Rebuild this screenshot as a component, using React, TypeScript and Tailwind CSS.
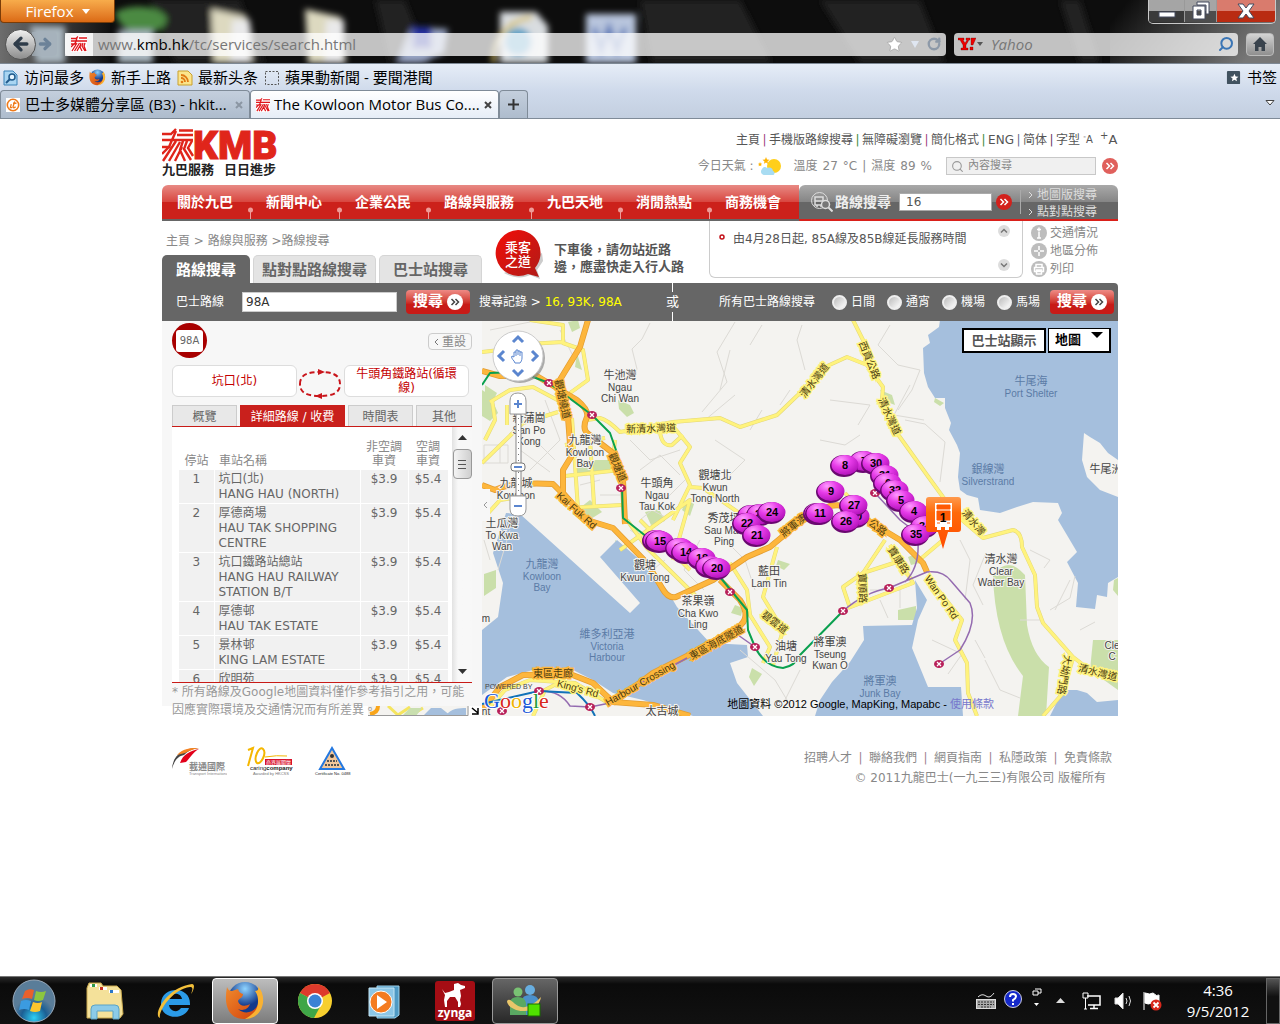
import type { ReactNode } from "react";
import { ArrowLeft, ArrowRight, Search, Star, RotateCw } from "lucide-react";

const pageFont = "[font-family:'DejaVu_Sans','Noto_Sans_CJK_TC',sans-serif]";
const uiFont = "[font-family:'Open_Sans','Noto_Sans_CJK_SC',sans-serif]";

/* ---------- shared drawings ---------- */

const KmbMark = ({ className }: { className: string }) => (
  <svg viewBox="0 0 16 16" className={className} fill="none">
    <rect width="16" height="16" fill="#fff" />
    <path d="M0 2.500h5l2-2M8 2h8M0 5h16M5 5l1-3M0 8h4l1-3M0 11l4-4M1 15l5-8M3.500 15l5-8M6 15l4-7M10 7l-1 4 2 4M12 7l-1 3 3 5M14 7l-1 3 2 5" stroke="#e0151b" strokeWidth="1.300" />
  </svg>
);

const Chevrons = ({ className, disc, ink }: { className: string; disc: string; ink: string }) => (
  <svg viewBox="0 0 16 16" className={className} fill="none">
    <circle cx="8" cy="8" r="8" fill={disc} />
    <path d="M4.500 5l3 3-3 3M8.500 5l3 3-3 3" stroke={ink} strokeWidth="1.500" />
  </svg>
);

/* ---------- browser window ---------- */

const DesktopBlur = () => (
  <svg className="absolute inset-0 h-full w-full" viewBox="0 0 1280 63" preserveAspectRatio="xMinYMin slice" aria-hidden="true">
    <defs>
      <filter id="glass" x="-20%" y="-20%" width="140%" height="140%">
        <feGaussianBlur stdDeviation="3" />
      </filter>
      <linearGradient id="edge" x1="0" x2="1">
        <stop offset="0" stopColor="#6d6d6d" />
        <stop offset="1" stopColor="#111" />
      </linearGradient>
      <linearGradient id="corner" x1="0" x2="1" y1="0" y2=".3">
        <stop offset=".1" stopColor="#0d0d0d" />
        <stop offset="1" stopColor="#777" />
      </linearGradient>
    </defs>
    <rect width="1280" height="63" fill="#0d0d0d" />
    <rect width="110" height="63" fill="url(#edge)" />
    <rect x="1110" width="170" height="63" fill="url(#corner)" />
    <g filter="url(#glass)">
      <path d="M150 0h90l25 63h-90zM375 0h30l25 63h-40zM640 0h100l32 63h-120zM820 0h100l25 63h-85zM1060 0h20l20 63h-20z" fill="#222" />
      <path d="M115 12c20-10 45-5 52 6-2 12-12 16-28 14-14 0-22-10-24-20z" fill="#4c8a43" />
      <path d="M30 26h35v37H36zM118 30h35v33h-35z" fill="#a9b6bf" />
      <path d="M211 9l36 8 5 46h-38z" fill="#ddd9c0" />
      <path d="M232 20h18v43h-20z" fill="#e9e9ea" />
      <path d="M305 9l36 8 5 46h-38z" fill="#ddd9c0" />
      <path d="M326 20h18v43h-20z" fill="#e9e9ea" />
      <path d="M412 27l36 2-4 24-24 10h-22z" fill="#98a4c4" />
      <path d="M412 27h20v22h-20z" fill="#2733a0" />
      <path d="M500 12h36l12 14v37h-48z" fill="#d9dde0" />
      <circle cx="518" cy="42" r="14" fill="#5aa0c4" />
      <path d="M494 63c-2-22 12-42 38-46" stroke="#d6bf62" strokeWidth="4" fill="none" />
      <path d="M586 14h50v49h-50z" fill="#b8c5dd" />
      <path d="M594 28l7 22 8-22 8 22 8-22" stroke="#5674b5" strokeWidth="5" fill="none" />
    </g>
  </svg>
);

const FirefoxBall = ({ className }: { className: string }) => (
  <svg viewBox="0 0 40 40" className={className}>
    <defs>
      <radialGradient id="globe" cx=".5" cy=".2"><stop offset="0" stopColor="#8fd4ff" /><stop offset="1" stopColor="#143a8c" /></radialGradient>
      <linearGradient id="fox" x1="0" y1="0" x2="1" y2="1"><stop offset="0" stopColor="#f08a2c" /><stop offset="1" stopColor="#d2400c" /></linearGradient>
    </defs>
    <circle cx="20" cy="18" r="17" fill="url(#globe)" />
    <path d="M2 6c1 3 3 4 5 4l6-2c1 3 2 4 5 5 0 4-4 4-5 7 1 5 7 6 12 3-2 6-8 7-12 5 6 6 17 4 20-5 2 8-5 15-14 15C5 38-2 26 2 6z" fill="url(#fox)" />
    <path d="M33 5c6 7 7 17 2 25-3 5-9 8-15 8 9-5 13-10 13-17 0-6-1-8-3-11 3 0 4-2 3-5z" fill="#f9b233" />
  </svg>
);

const TitleBar = () => (
  <div className="relative h-[63px] overflow-hidden">
    <DesktopBlur />
    <div className="relative flex h-6 items-start justify-between pr-1">
      <button className="flex h-[23px] w-[115px] items-center justify-center gap-2 rounded-b border border-t-0 border-[#7a3c08] bg-gradient-to-b from-[#f7ac4b] to-[#db6a13] text-[15px] text-white">
        Firefox
        <svg viewBox="0 0 8 5" className="h-[5px] w-2" fill="#fff"><path d="M0 0h8L4 5z" /></svg>
      </button>
      <div className="flex h-6 overflow-hidden rounded-b-[5px] border border-t-0 border-[#c9c9c9]">
        <button aria-label="minimize" className="flex h-[22px] w-9 items-center justify-center border-r border-[#999] bg-gradient-to-b from-[#a5a5a5] from-50% to-[#3a3a3a] to-50%">
          <svg viewBox="0 0 18 16" className="h-4 w-[18px]"><rect x="1" y="9" width="16" height="5" fill="#fff" stroke="#444b5e" /></svg>
        </button>
        <button aria-label="restore" className="flex h-[22px] w-8 items-center justify-center border-r border-[#999] bg-gradient-to-b from-[#a5a5a5] from-50% to-[#4d4d4d] to-50%">
          <svg viewBox="0 0 20 20" className="h-5 w-5" stroke="#444b5e">
            <path d="M6 1h12v12h-3V4H6z" fill="#fff" />
            <path d="M2 5h12v13H2zM6 9v5h4V9z" fill="#fff" fillRule="evenodd" />
          </svg>
        </button>
        <button aria-label="close" className="flex h-[22px] w-[58px] items-center justify-center bg-gradient-to-b from-[#d97b6d] from-50% to-[#b92b12] to-50%">
          <svg viewBox="0 0 18 16" className="h-4 w-[18px]"><path d="M1 1h5l3 4 3-4h5l-5 7 5 7h-5l-3-4-3 4H1l5-7z" fill="#fff" stroke="#444b5e" /></svg>
        </button>
      </div>
    </div>
    <div className="relative flex h-10 items-center pl-[5px] pr-[6px]">
      <button aria-label="back" className="z-10 flex h-[31px] w-[31px] shrink-0 items-center justify-center rounded-full border border-[#555] bg-gradient-to-b from-[#f0f0f0] to-[#8d8d8d]">
        <ArrowLeft className="h-5 w-5 text-[#2f3c4a]" strokeWidth={4} />
      </button>
      <button aria-label="forward" className="-ml-1 mr-2 flex h-6 w-[25px] shrink-0 items-center justify-center rounded-r bg-[#a5b0bb]/70">
        <ArrowRight className="h-4 w-4 text-[#6c8298]" strokeWidth={5} />
      </button>
      <div className="flex h-[23px] flex-1 items-center rounded-sm bg-white/75">
        <span className="flex h-full w-7 items-center justify-center bg-white/80"><KmbMark className="h-4 w-4" /></span>
        <div className="flex-1 pl-[5px] text-[15px] leading-5 text-[#777]">
          www.<span className="text-black">kmb.hk</span>/tc/services/search.html
        </div>
        <Star className="h-[17px] w-[17px] text-[#999]" fill="#fff" strokeWidth={1} />
        <svg viewBox="0 0 8 7" className="mx-2 h-[7px] w-2" fill="#dfe6f1"><path d="M0 0h8L4 7z" /></svg>
        <RotateCw className="mr-[5px] h-[14px] w-[14px] text-[#8d99a8]" strokeWidth={4} />
      </div>
      <div className="ml-2 flex h-[23px] w-[284px] items-center rounded-sm bg-white/75 px-1">
        <svg viewBox="0 0 18 14" className="h-[14px] w-[18px]"><path d="M0 1h6v2H5l2 3 2-3H8V1h4v2h-1L8 8v3h2v2H3v-2h2V8L2 3H0zM13 1h5l-3 7h-2zM12 10h3v3h-3z" fill="#e00" stroke="#500" strokeWidth=".3" /></svg>
        <svg viewBox="0 0 6 4" className="ml-[1px] h-1 w-[6px]" fill="#555"><path d="M0 0h6L3 4z" /></svg>
        <input aria-label="Yahoo" placeholder="Yahoo" className="ml-2 min-w-0 flex-1 bg-transparent text-[15px] italic outline-none placeholder:text-[#777]" />
        <Search className="h-4 w-4 -scale-x-100 text-[#3a75b5]" strokeWidth={3} />
      </div>
      <button aria-label="home" className="ml-2 flex h-[23px] w-7 items-center justify-center rounded-sm border border-[#bbb] bg-gradient-to-b from-[#d4d4d4] to-[#8f8f8f]">
        <svg viewBox="0 0 16 16" className="h-4 w-4" fill="#39434d"><path d="M8 1l7 7h-2v7H9.500v-4h-3v4H3V8H1z" /></svg>
      </button>
    </div>
  </div>
);

const Bookmarks = () => (
  <div className="flex h-7 items-center border-t border-[#7d8894] bg-gradient-to-b from-[#e6edf7] to-[#cfdaeb] pl-[3px] pr-[3px] text-[15px] text-black">
    <svg viewBox="0 0 16 16" className="h-4 w-4"><path d="M1 1h9l4 4v10H1z" fill="#a9d5f2" stroke="#3a82b8" /><circle cx="9" cy="7" r="3" fill="#e8f6ff" stroke="#205a8c" strokeWidth="1.500" /><path d="M7 9l-4 4" stroke="#205a8c" strokeWidth="2" /></svg>
    <a href="#most" className="ml-[5px]">访问最多</a>
    <FirefoxBall className="ml-[5px] h-[17px] w-[17px]" />
    <a href="#start" className="ml-[5px]">新手上路</a>
    <svg viewBox="0 0 16 16" className="ml-[6px] h-4 w-4"><path d="M1 1h10l4 4v10H1z" fill="#fbe48c" stroke="#c9a02c" /><path d="M4 8a4 4 0 014 4M4 5a7 7 0 017 7" stroke="#e07b15" strokeWidth="1.800" fill="none" /><circle cx="5" cy="12" r="1.300" fill="#e07b15" /></svg>
    <a href="#news" className="ml-[5px]">最新头条</a>
    <svg viewBox="0 0 16 16" className="ml-[6px] h-4 w-4"><rect x="1.500" y="1.500" width="13" height="13" fill="none" stroke="#555" strokeDasharray="2 1.500" /></svg>
    <a href="#apple" className="ml-[5px]">蘋果動新聞 - 要聞港聞</a>
    <svg viewBox="0 0 16 16" className="ml-auto h-[15px] w-[15px]"><rect x="1" y="1" width="14" height="14" rx="1" fill="#41525f" /><path d="M9 4l1.300 2.800 3 .3-2.300 2 .7 3L9 10.500l-2.700 1.600.7-3-2.300-2 3-.3z" fill="#fff" /></svg>
    <a href="#bookmarks" className="ml-[6px]">书签</a>
  </div>
);

const TabClose = ({ color }: { color: string }) => (
  <svg viewBox="0 0 8 8" className="h-2 w-2" stroke={color} strokeWidth="2"><path d="M1 1l6 6M7 1L1 7" /></svg>
);

const TabStrip = () => (
  <div className="flex h-7 items-end border-b border-[#7f8b98] bg-gradient-to-b from-[#cfdaeb] to-[#c3cfe0] text-[15px] text-black">
    <div className="flex h-7 w-[250px] items-center rounded-t border border-b-0 border-[#7f8b98] bg-gradient-to-b from-[#c4cfdd] to-[#aebccd] pl-[5px] pr-[6px]">
      <svg viewBox="0 0 16 16" className="h-4 w-[14px]"><rect width="16" height="16" fill="#fff" /><circle cx="8" cy="8" r="6.500" fill="none" stroke="#ef7a1a" strokeWidth="1.800" /><path d="M6 7l-1 4h2M10 4L8 10c0 2 2 1 3 0M8 6h4" fill="none" stroke="#ef7a1a" strokeWidth="1.500" /></svg>
      <a href="#hkitalk" className="ml-[5px] flex-1 whitespace-nowrap">巴士多媒體分享區 (B3) - hkit...</a>
      <TabClose color="#8b96a3" />
    </div>
    <div className="flex h-7 w-[249px] items-center rounded-t border border-b-0 border-[#7f8b98] bg-gradient-to-b from-white to-[#e6edf7] pl-[5px] pr-[6px]">
      <KmbMark className="h-4 w-[14px]" />
      <a href="#kmb" className="ml-1 flex-1 whitespace-nowrap">The Kowloon Motor Bus Co....</a>
      <TabClose color="#444" />
    </div>
    <button aria-label="new tab" className="flex h-7 w-[29px] items-center justify-center rounded-t border border-b-0 border-[#7f8b98] bg-gradient-to-b from-[#c4cfdd] to-[#aebccd]">
      <svg viewBox="0 0 11 11" className="h-[11px] w-[11px]" stroke="#333" strokeWidth="2"><path d="M5.500 0v11M0 5.500h11" /></svg>
    </button>
    <svg viewBox="0 0 10 6" className="mb-3 ml-auto mr-[5px] h-[6px] w-[10px]" fill="#fff" stroke="#444"><path d="M1 .5h8L5 5z" /></svg>
  </div>
);

/* ---------- site header ---------- */

const topLinks = ["主頁", "手機版路線搜尋", "無障礙瀏覽", "簡化格式", "ENG", "简体"];
const sepColors = ["text-[#a04080]", "text-[#3a8a3a]", "text-[#a04080]", "text-[#3a8a3a]", "text-[#6a6a90]", "text-[#6a3a6a]"];

const SiteHeader = () => (
  <div className="flex h-[66px] justify-between">
    <svg viewBox="0 0 116 50" className="mt-[9px] h-[50px] w-[116px]" role="img" aria-label="KMB">
      <g fill="none" stroke="#e0251b" strokeWidth="2.400">
        <path d="M0 6h9l5-5M17 2.500h14M15 7h16M0 12h31M10 12l4-9M0 19h7l3-7M0 26l8-8M1 33l13-20M7 33l11-19M13 33l7-14M21 13l-3 9 5 11M25 13l-3 8 7 11M30 13l-4 7 5 8" />
      </g>
      <text x="31" y="31" fontFamily="Roboto" fontWeight="900" fontSize="39" fill="#e0251b" stroke="#e0251b" strokeWidth="1">KMB</text>
      <text x="0" y="46" fontFamily="Noto Sans CJK TC" fontWeight="700" fontSize="13" fill="#222">九巴服務</text>
      <text x="62" y="46" fontFamily="Noto Sans CJK TC" fontWeight="700" fontSize="13" fill="#222">日日進步</text>
    </svg>
    <div className="pt-[13px]">
      <div className="flex h-4 items-center justify-end text-xs leading-4 text-[#555]">
        {topLinks.map((text, i) => (
          <span key={text} className="flex">
            <a href={"#top" + i}>{text}</a>
            <span className={"w-[9px] text-center " + sepColors[i]}>|</span>
          </span>
        ))}
        <span>字型</span>
        <a href="#smaller" className="w-4 text-center text-[10px]"><sup>-</sup>A</a>
        <a href="#larger" className="ml-1 w-[18px] text-[13px]"><sup className="text-[10px]">+</sup>A</a>
      </div>
      <div className="mt-2 flex h-5 items-center justify-end text-xs text-[#888]">
        <span>今日天氣 :</span>
        <svg viewBox="0 0 24 18" className="ml-1 mr-3 h-[18px] w-6">
          <circle cx="16" cy="9" r="7" fill="#ffcf1a" />
          <path d="M8 0l1 2.500 2.500.2-2 1.700.6 2.400L8 5.500 5.900 6.800l.6-2.400-2-1.700L7 2.500zM2 5l.7 1.600 1.500.1-1.200 1 .4 1.500L2 8.400.6 9.200 1 7.700 0 6.700l1.400-.1z" fill="#ffb400" />
          <path d="M4 12a3 3 0 015-1 4 4 0 016 3 2 2 0 01-1 4H6c-3 0-4-4-2-6z" fill="#a8dcf2" />
        </svg>
        <span className="flex gap-[5px]"><span>溫度</span><span>27</span><span>°C</span><span>|</span><span>濕度</span><span>89</span><span>%</span></span>
        <form className="ml-[14px] flex h-[18px] w-[150px] items-center border border-[#c8c8c8] bg-[#f0f0f0] pl-1">
          <Search className="h-[13px] w-[13px] shrink-0 text-[#999]" />
          <input aria-label="內容搜尋" placeholder="內容搜尋" className="ml-1 w-full min-w-0 bg-transparent text-[11px] outline-none placeholder:text-[#888]" />
        </form>
        <button aria-label="go" className="ml-[6px]"><Chevrons className="h-4 w-4" disc="#e0605c" ink="#fff" /></button>
      </div>
    </div>
  </div>
);

const navItems = ["關於九巴", "新聞中心", "企業公民", "路線與服務", "九巴天地", "消閒熱點", "商務機會"];

const NavBar = () => (
  <nav className="flex h-9">
    <div className="flex flex-1 items-center rounded-tl-md border-b-2 border-[#666] bg-[linear-gradient(#e88a84,#d8463f_50%,#cc211b_50%)] pl-[15px] text-sm font-bold text-white">
      {navItems.map((item, i) => (
        <span key={item} className="flex h-full items-center whitespace-nowrap">
          <a href={"#nav" + i}>{item}</a>
          {i < navItems.length - 1 && (
            <svg viewBox="0 0 33 12" className="h-3 w-[33px] self-end"><circle cx="17.500" cy="3" r="2.500" fill="#ef9c98" /><path d="M17.500 3v9" stroke="#ef9c98" /></svg>
          )}
        </span>
      ))}
    </div>
    <div className="flex w-[319px] items-center rounded-t-md border-b-2 border-[#d9201a] bg-[linear-gradient(#a9a9a9,#858585_50%,#666_50%)] pl-3">
      <svg viewBox="0 0 22 20" className="h-5 w-[22px]" fill="none" stroke="#ddd"><circle cx="8.500" cy="8.500" r="8" /><path d="M4 5h8v8H4zM4 9h8M6 13v2M10 13v2" strokeWidth="1.500" /><circle cx="14.500" cy="12.500" r="4" fill="#777" strokeWidth="1.500" /><path d="M17.500 15.500l4 4" strokeWidth="2" /></svg>
      <label htmlFor="quick" className="ml-[2px] w-[62px] text-sm font-bold text-[#eee]">路線搜尋</label>
      <input id="quick" defaultValue="16" className="ml-[2px] h-[18px] w-[93px] border border-[#aaa] bg-white pl-[6px] text-xs text-[#555]" />
      <button aria-label="go" className="ml-1"><Chevrons className="h-4 w-4" disc="#d3211c" ink="#fff" /></button>
      <div className="ml-2 flex h-6 flex-col justify-center border-l border-[#aaa] pl-2 pt-[3px] text-xs leading-[17px] text-[#ddd]">
        <a href="#mapsearch" className="flex items-center gap-1"><svg viewBox="0 0 4 8" className="h-2 w-1" fill="none" stroke="#ddd"><path d="M0 1l3 3-3 3" /></svg>地圖版搜尋</a>
        <a href="#p2p" className="flex items-center gap-1"><svg viewBox="0 0 4 8" className="h-2 w-1" fill="none" stroke="#ddd"><path d="M0 1l3 3-3 3" /></svg>點對點搜尋</a>
      </div>
    </div>
  </nav>
);

const RoundArrow = ({ up }: { up?: boolean }) => (
  <svg viewBox="0 0 12 12" className="h-3 w-3" fill="none"><circle cx="6" cy="6" r="6" fill="#ddd" /><path d={up ? "M3 7.500l3-3 3 3" : "M3 4.500l3 3 3-3"} stroke="#777" strokeWidth="1.500" /></svg>
);

const tools = [
  { text: "交通情況", icon: <path d="M8 7v6M6 13h4M6 4.500h4M8 2.500v4" /> },
  { text: "地區分佈", icon: <path d="M8 3v4M8 9v4M3 8h4M9 8h4" /> },
  { text: "列印", icon: <path d="M5 6V3.500h6V6M3.500 6.500h9v4h-9zM5.500 9h5v4h-5z" /> },
];

const SubHeader = () => (
  <div className="flex h-[62px]">
    <div className="flex w-[320px] flex-col justify-between pt-3">
      <div className="pl-1 text-xs leading-4 text-[#888]">
        <a href="#home">主頁</a> &gt; <a href="#services">路線與服務</a> &gt;<a href="#search">路線搜尋</a>
      </div>
      <div className="flex h-7 gap-[3px] text-[15px] font-bold text-[#666]">
        <button className="w-[88px] rounded-t-[5px] bg-[#666] pt-[2px] font-bold text-white">路線搜尋</button>
        <button className="w-[123px] rounded-t-[5px] border border-b-0 border-[#d5d5d5] bg-[#e4e4e4] pt-[2px] font-bold">點對點路線搜尋</button>
        <button className="w-[103px] rounded-t-[5px] border border-b-0 border-[#d5d5d5] bg-[#e4e4e4] pt-[2px] font-bold">巴士站搜尋</button>
      </div>
    </div>
    <svg viewBox="0 0 50 51" className="ml-3 mt-2 h-[51px] w-[50px]">
      <defs><linearGradient id="badge" x1="0" y1="0" x2="1" y2="1"><stop offset="0" stopColor="#f20d08" /><stop offset="1" stopColor="#b01c18" /></linearGradient></defs>
      <path d="M10 44c10 6 20 5 26 2l10 4-3-9 6-9-1-8" fill="#ccc" />
      <path d="M24 1a23 23 0 0117 38l4 9-11-3A23 23 0 1124 1z" fill="url(#badge)" />
      <text x="24" y="23" textAnchor="middle" fontFamily="Noto Sans CJK TC" fontSize="13" fontWeight="500" fill="#fff">乘客</text>
      <text x="24" y="37" textAnchor="middle" fontFamily="Noto Sans CJK TC" fontSize="13" fontWeight="500" fill="#fff">之道</text>
    </svg>
    <p className="ml-[10px] w-[140px] pt-5 text-[13px] font-bold leading-[17px] text-[#555]">下車後，請勿站近路<br />邊，應盡快走入行人路</p>
    <div className="ml-[15px] flex h-[57px] flex-1 justify-between rounded-b-md border border-t-0 border-[#ccc] pl-[9px] pr-3">
      <div className="flex items-start gap-2 pt-[10px] text-xs leading-4 text-[#555]">
        <svg viewBox="0 0 6 6" className="mt-[3px] h-[6px] w-[6px]" fill="none" stroke="#c4121a" strokeWidth="1.500"><circle cx="3" cy="3" r="2" /></svg>
        <a href="#notice">由4月28日起, 85A線及85B線延長服務時間</a>
      </div>
      <div className="flex flex-col justify-between pb-[6px] pt-1">
        <button aria-label="up"><RoundArrow up /></button>
        <button aria-label="down"><RoundArrow /></button>
      </div>
    </div>
    <div className="ml-2 w-[87px] pt-[3px] text-xs leading-[18px] text-[#888]">
      {tools.map((t) => (
        <a key={t.text} href={"#" + t.text} className="flex h-[18px] items-center gap-[3px]">
          <svg viewBox="0 0 16 16" className="h-4 w-4" fill="none" stroke="#fff" strokeWidth="1.500"><circle cx="8" cy="8" r="8" fill="#bdbdbd" stroke="none" />{t.icon}</svg>
          {t.text}
        </a>
      ))}
    </div>
  </div>
);

const SearchButton = () => (
  <button className="flex h-6 w-16 items-center justify-center gap-1 rounded bg-gradient-to-b from-[#ee8a85] to-[#c81b17] to-60% text-[15px] font-bold text-white">
    搜尋 <Chevrons className="h-4 w-4" disc="#fff" ink="#444" />
  </button>
);

const SearchBar = () => (
  <form className="flex h-[38px] items-center rounded-tr bg-[#666] pl-[14px] pr-1 text-xs text-white">
    <label htmlFor="route" className="w-[66px]">巴士路線</label>
    <input id="route" defaultValue="98A" className="mr-[9px] h-5 w-[155px] border border-[#ccc] bg-white pl-[3px] text-xs text-[#333]" />
    <SearchButton />
    <span className="ml-[9px]">搜尋記錄 &gt; <a href="#history" className="text-[#ff0]">16, 93K, 98A</a></span>
    <span className="ml-auto flex h-full flex-col items-center text-[13px] leading-4"><i className="w-px flex-1 bg-white" /><span className="py-[2px]">或</span><i className="w-px flex-1 bg-white" /></span>
    <span className="ml-10 mr-[17px]">所有巴士路線搜尋</span>
    <div className="mr-[10px] flex gap-3">
      {["日間", "通宵", "機場", "馬場"].map((kind) => (
        <label key={kind} className="flex items-center gap-1">
          <input type="radio" name="kind" className="h-[15px] w-[15px] appearance-none rounded-full border-2 border-[#eee] bg-gradient-to-br from-[#bbb] to-white" />
          {kind}
        </label>
      ))}
    </div>
    <SearchButton />
  </form>
);

/* ---------- route panel ---------- */

const stops = [
  { n: 1, zh: "坑口(北)", en: "HANG HAU (NORTH)" },
  { n: 2, zh: "厚德商場", en: "HAU TAK SHOPPING CENTRE" },
  { n: 3, zh: "坑口鐵路站總站", en: "HANG HAU RAILWAY STATION B/T" },
  { n: 4, zh: "厚德邨", en: "HAU TAK ESTATE" },
  { n: 5, zh: "景林邨", en: "KING LAM ESTATE" },
  { n: 6, zh: "欣明苑", en: "" },
];

const StopTable = () => (
  <table className="ml-[7px] w-[269px] table-fixed border-collapse self-start text-xs leading-[15px] text-[#666]">
    <colgroup>
      <col className="w-[35px]" />
      <col className="w-[146px]" />
      <col className="w-[48px]" />
      <col className="w-[40px]" />
    </colgroup>
    <thead>
      <tr className="h-[43px] align-bottom leading-[14px] text-[#888]">
        <th className="pb-[2px] text-center font-normal">停站</th>
        <th className="pb-[2px] pl-[5px] text-left font-normal">車站名稱</th>
        <th className="pb-[2px] font-normal">非空調<br />車資</th>
        <th className="pb-[2px] font-normal">空調<br />車資</th>
      </tr>
    </thead>
    <tbody>
      {stops.map((s) => (
        <tr key={s.n} className="align-top">
          <td className="border-b border-r border-white bg-[#f1f1f1] pb-[1px] pt-[2px] text-center">{s.n}</td>
          <td className="border-b border-r border-white bg-[#f1f1f1] pb-[1px] pl-1 pt-[2px]">{s.zh}<br />{s.en}</td>
          <td className="border-b border-r border-white bg-[#f1f1f1] pb-[1px] pt-[2px] text-center">$3.9</td>
          <td className="border-b border-r border-white bg-[#f1f1f1] pb-[1px] pt-[2px] text-center">$5.4</td>
        </tr>
      ))}
    </tbody>
  </table>
);

const RoutePanel = () => (
  <div className="relative w-[320px] shrink-0">
    <div className="h-[385px] bg-[#f7f7f7] px-[10px] pt-[2px]">
      <div className="flex h-[35px] items-end justify-between">
        <div className="flex h-[35px] w-[35px] items-center justify-center rounded-full bg-[#a80000]">
          <span className="flex h-[22px] w-[27px] items-center justify-center rounded-[3px] bg-white text-[10px] text-[#666]">98A</span>
        </div>
        <button className="mb-2 flex h-[17px] w-11 items-center justify-center gap-1 rounded border border-[#ccc] text-xs text-[#888]">
          <svg viewBox="0 0 4 8" className="h-2 w-1" fill="none" stroke="#777"><path d="M4 1L1 4l3 3" /></svg>重設
        </button>
      </div>
      <div className="mt-[7px] flex h-8 pr-[3px] text-center text-xs leading-[14px] text-[#c40000]">
        <div className="flex w-[125px] items-center justify-center rounded-md border border-[#ddd] bg-white">坑口(北)</div>
        <svg viewBox="0 0 47 34" className="mt-[3px] h-[34px] w-[47px]" fill="none">
          <path d="M3 16C3 6 12 4 23 4s20 2 20 12-9 12-20 12S3 26 3 16z" stroke="#c9151b" strokeWidth="2" strokeDasharray="5 3" />
          <path d="M21 1l7 3-7 3zM25 25l-7 3 7 3z" fill="#c9151b" />
        </svg>
        <div className="flex w-[125px] items-center justify-center rounded-md border border-[#ddd] bg-white px-2">牛頭角鐵路站(循環線)</div>
      </div>
      <div className="mt-2 flex h-[22px] gap-[3px] border-b border-[#c81b17] text-xs text-[#666]">
        <button className="w-[65px] border border-b-0 border-[#ccc] bg-[#e8e8e8] pt-[2px]">概覽</button>
        <button className="w-[105px] bg-[#c9201c] pt-[2px] text-white">詳細路線 / 收費</button>
        <button className="w-[65px] border border-b-0 border-[#ccc] bg-[#e8e8e8] pt-[2px]">時間表</button>
        <button className="flex-1 border border-b-0 border-[#ccc] bg-[#e8e8e8] pt-[2px]">其他</button>
      </div>
      <div className="flex h-[256px] justify-between overflow-hidden border-b border-[#c81b17] bg-white">
        <StopTable />
        <div className="flex h-full w-5 flex-col items-center bg-gradient-to-r from-[#e2e2e2] to-[#f8f8f8] to-30%">
          <svg viewBox="0 0 9 5" className="mt-2 h-[5px] w-[9px]" fill="#333"><path d="M0 5h9L4.500 0z" /></svg>
          <div className="mt-[9px] flex h-[30px] w-[19px] flex-col items-center justify-center gap-[3px] rounded-sm border border-[#999] bg-gradient-to-r from-[#f4f4f4] to-[#cfcfcf]">
            <i className="h-px w-2 bg-[#555]" /><i className="h-px w-2 bg-[#555]" /><i className="h-px w-2 bg-[#555]" />
          </div>
          <svg viewBox="0 0 9 5" className="mb-2 mt-auto h-[5px] w-[9px]" fill="#333"><path d="M0 0h9L4.500 5z" /></svg>
        </div>
      </div>
      <p className="relative z-10 text-xs leading-[18px] text-[#999]">* 所有路線及Google地圖資料僅作參考指引之用，可能<br />因應實際環境及交通情況而有所差異。</p>
    </div>
    {/* corner of the overview map */}
    <svg viewBox="0 0 113 10" className="absolute bottom-0 left-[206px] h-[10px] w-[113px]">
      <rect width="113" height="10" fill="#f4f3f0" />
      <path d="M55 10l8-8h10l10 8zM78 10c4-8 14-8 20-8v8z" fill="#a5bfdd" />
      <path d="M20 0l10 9 12-8M45 8l10-6" stroke="#f5e55f" strokeWidth="3" fill="none" />
      <path d="M2 8c6-1 8-4 8-8" stroke="#f9a51a" strokeWidth="4" fill="none" />
      <path d="M34 10l8-8h12l-6 8z" fill="#c9dfaf" />
      <path d="M0 9.500h100V0" stroke="#999" fill="none" />
      <rect x="101" width="12" height="10" fill="#fff" />
      <path d="M104 2l6 5M110 2v6h-6" stroke="#000" strokeWidth="1.500" fill="none" />
    </svg>
  </div>
);

/* ---------- map ---------- */

const orangeRoads = [
  "M588 320L580 347L558 383L568 417L571 457L563 470L563 493L587 520L613 528L647 563L662 588Q668 599 676 597L713 580L747 557L770 547L800 522L830 506Q850 502 867 520L900 540L923 563L927 572",
  "M482 371L500 376L535 375L577 400Q589 410 587 417Q582 428 587 433L613 453L623 480L625 524",
  "M482 485L495 490Q510 482 553 484L572 503",
  "M720 580L740 600Q752 618 738 627L693 653L653 673L613 703",
  "M482 710L500 687L523 675L570 674L593 683L613 702L653 705L690 716",
];

const yellowRoads = [
  "M587 420L600 418Q608 420 620 432L673 422L720 418L740 427L777 415L800 393L825 367L847 357L867 365L883 387L882 400L897 433L927 475L943 497L962 520L983 538L1013 530Q1022 532 1022 547L1035 575L1037 607L1043 623L1073 657L1090 670L1118 673",
  "M853 320L868 350L875 377",
  "M1073 658L1063 693L1043 716",
  "M928 577L962 620L955 640L967 663L968 693L977 716",
  "M885 540L863 573L862 600",
  "M850 608L843 587L863 573L900 561M890 545L913 583L848 608M917 562L943 540",
  "M627 520L647 548L700 600M620 550L690 500L673 560M640 520L690 570",
  "M660 432Q662 447 672 445L683 435M672 425L690 447L680 463L690 485L673 520M690 487L703 488L745 517",
  "M730 563L747 590L750 615L770 647L763 663M777 547L763 597L783 630L773 665",
  "M530 320L563 325L563 343L583 350L588 380L570 393M482 352L500 350M510 345L563 342",
  "M490 402L510 390L533 387L563 403M507 405L507 425M482 463L523 423L558 412",
  "M572 418L578 510M565 476L620 470M567 508L622 505M590 440L594 505M565 445L605 438M612 470L615 440",
  "M482 520L500 500L520 497M485 440L495 420L492 400",
  "M482 716L505 690L530 680L575 683L610 704M533 716L545 690L560 682",
  "M845 493L868 518L882 535",
];

const stations = [[549, 383], [592, 415], [621, 488], [730, 592], [755, 647], [539, 691], [590, 707], [502, 711], [843, 611], [889, 588], [939, 664], [875, 493]];

type Label = { x: number; y: number; zh?: string; en?: string[]; sea?: boolean };
const labels: Label[] = [
  { x: 620, y: 379, zh: "牛池灣", en: ["Ngau", "Chi Wan"] },
  { x: 529, y: 422, zh: "新蒲崗", en: ["San Po", "Kong"] },
  { x: 585, y: 444, zh: "九龍灣", en: ["Kowloon", "Bay"] },
  { x: 516, y: 487, zh: "九龍城", en: ["Kowloon"] },
  { x: 657, y: 487, zh: "牛頭角", en: ["Ngau", "Tau Kok"] },
  { x: 715, y: 479, zh: "觀塘北", en: ["Kwun", "Tong North"] },
  { x: 724, y: 522, zh: "秀茂坪", en: ["Sau Mau", "Ping"] },
  { x: 502, y: 527, zh: "土瓜灣", en: ["To Kwa", "Wan"] },
  { x: 542, y: 568, zh: "九龍灣", en: ["Kowloon", "Bay"], sea: true },
  { x: 645, y: 569, zh: "觀塘", en: ["Kwun Tong"] },
  { x: 769, y: 575, zh: "藍田", en: ["Lam Tin"] },
  { x: 698, y: 605, zh: "茶果嶺", en: ["Cha Kwo", "Ling"] },
  { x: 607, y: 638, zh: "維多利亞港", en: ["Victoria", "Harbour"], sea: true },
  { x: 786, y: 650, zh: "油塘", en: ["Yau Tong"] },
  { x: 830, y: 646, zh: "將軍澳", en: ["Tseung", "Kwan O"] },
  { x: 880, y: 685, zh: "將軍澳", en: ["Junk Bay"], sea: true },
  { x: 1001, y: 563, zh: "清水灣", en: ["Clear", "Water Bay"] },
  { x: 1031, y: 385, zh: "牛尾海", en: ["Port Shelter"], sea: true },
  { x: 988, y: 473, zh: "銀線灣", en: ["Silverstrand"], sea: true },
  { x: 1106, y: 473, zh: "牛尾洲" },
  { x: 662, y: 715, zh: "太古城" },
  { x: 1112, y: 637, en: ["Cle", "C"] },
  { x: 486, y: 610, en: ["m"] },
  { x: 486, y: 703, en: ["nt"] },
];

type RoadName = { x: number; y: number; r: number; text: string; orange?: boolean };
const roadNames: RoadName[] = [
  { x: 563, y: 399, r: 77, text: "觀塘繞道", orange: true },
  { x: 651, y: 428, r: -2, text: "新清水灣道" },
  { x: 618, y: 467, r: 67, text: "觀塘道", orange: true },
  { x: 577, y: 510, r: 42, text: "Kai Fuk Rd", orange: true },
  { x: 793, y: 525, r: -38, text: "將軍澳", orange: true },
  { x: 716, y: 642, r: -29, text: "東區海底隧道", orange: true },
  { x: 640, y: 683, r: -30, text: "Harbour Crossing", orange: true },
  { x: 553, y: 673, r: 0, text: "東區走廊", orange: true },
  { x: 578, y: 688, r: 15, text: "King's Rd" },
  { x: 775, y: 622, r: 38, text: "碧雲道" },
  { x: 870, y: 360, r: 68, text: "西貢公路" },
  { x: 814, y: 380, r: -52, text: "清水灣道" },
  { x: 890, y: 416, r: 65, text: "清水灣道" },
  { x: 878, y: 527, r: 38, text: "公路", orange: true },
  { x: 899, y: 560, r: 57, text: "寶康路" },
  { x: 863, y: 588, r: 88, text: "寶順路" },
  { x: 942, y: 597, r: 55, text: "Wan Po Rd" },
  { x: 974, y: 522, r: 50, text: "清水灣" },
  { x: 1098, y: 672, r: 14, text: "清水灣道" },
  { x: 1065, y: 675, r: 100, text: "大坳門路" },
];

const busStops = [
  ["15", 657, 540], ["15", 660, 541], ["17", 680, 548], ["14", 686, 552], ["18", 702, 558], ["19", 710, 566], ["20", 717, 568],
  ["13", 752, 515], ["23", 761, 514], ["24", 772, 512], ["22", 747, 523], ["21", 757, 535],
  ["7", 864, 461], ["8", 845, 465], ["30", 876, 463], ["31", 885, 475], ["6", 888, 483], ["32", 895, 490], ["5", 901, 500], ["4", 914, 511],
  ["9", 831, 491], ["11", 818, 513], ["11", 820, 513], ["10", 856, 516], ["27", 854, 505], ["26", 846, 521], ["34", 925, 526], ["35", 916, 534],
] as const;

const MapDrawing = () => (
  <svg viewBox="482 321 636 395" preserveAspectRatio="xMidYMid slice" className="absolute inset-0 h-full w-full" fontFamily="'Liberation Sans','Noto Sans CJK TC',sans-serif">
    <defs>
      <radialGradient id="pin" cx=".35" cy=".25" r=".8"><stop offset="0" stopColor="#ff9bff" /><stop offset=".45" stopColor="#e63be8" /><stop offset="1" stopColor="#b010b8" /></radialGradient>
      <linearGradient id="stop1" x1="0" y1="0" x2="0" y2="1"><stop offset="0" stopColor="#ff9a4d" /><stop offset=".3" stopColor="#ff6a0a" /><stop offset="1" stopColor="#ff4a00" /></linearGradient>
    </defs>
    <rect x="482" y="321" width="636" height="395" fill="#f4f3f0" />
    {/* parks */}
    <g fill="#cadfaa">
      <path d="M482 390l8 5 8 18-8 8-8-5zM485 385l12 8-4 8-8-6zM577 353l5 17-7-3zM618 400l12 5 4 8-7 4-8-8zM576 460h40l-4 10-36 4zM568 322l10-2 2 8-8 4zM686 500l8 4-4 12-8-6zM735 605l8 3-2 8-10-3zM778 560l12 4-6 6-8-4zM993 575q15-20 32 0l2 50q5 30 22 42l-3 49h-28l5-40q-28-35-30-101zM1093 640h25v50l-28-20zM898 610l18-4v14h-18zM880 390l12 5 3 10-8-3zM935 398l9 5-4 3-6-4zM645 512l14-3 6 12-14 4zM752 668l10 6-8 12-5-9zM484 574l12-4v18l-12 8zM590 500l12 12-16 10-14-8zM1114 580l4-2v18l-5-6zM908 557l8-3 3 9-8 2zM615 540l6 4-4 5z" />
    </g>
    {/* sea */}
    <g fill="#a5bfdd">
      <path d="M940 320L939 327L928 335L930 343L923 348L924 373L928 387L935 398L945 398L945 408L951 423L949 430L957 445L960 453L958 477L960 490L967 495L978 498L980 510L1000 513L1017 507L1033 502L1058 503L1062 513L1058 520L1077 552L1067 562L1078 583L1076 607L1095 609L1097 595L1107 597L1108 583L1118 577V320Z" />
      <path d="M1050 716L1063 690L1077 690L1087 693L1097 702L1118 700V716ZM863 626L912 625L917 608L915 580L921 590L927 600L918 620L912 648L928 687L961 687L963 716H815L820 700L832 682L850 662L864 640Z" />
      <path d="M506 513L520 514L630 613L640 603L600 557L617 540L640 560L667 590L677 607L710 643L747 645L748 657L730 663L737 683L763 716H693L643 700L613 693L593 680L573 670L533 670L507 677L482 695V630L498 617L503 583L493 553Z" />
    </g>
    <path d="M1084 433L1090 437L1100 443L1108 453L1118 460V497L1100 490L1087 477L1082 460Z" fill="#f4f3f0" />
    {/* minor streets */}
    <g fill="none" stroke="#dcdad5" strokeWidth="1">
      <path d="M650 323l-8 16-10 10 5 20-6 12M735 322l-18 30 10 30-25 30M762 325l-12 20M705 420l30-25M730 350l-10 40M890 325l-12 20 20 20 22 5-8 20-14 20M910 385l-16 30 30 5M905 420l20 4 20 18-5 40M560 330l15 30M490 330l40-8M500 360l30 2M484 445h24v18h-24zM500 445v18M630 440l20 20 30-10M640 470l20-15 20 20M665 500l20-20M750 430l12-20M780 405l10-15M820 440l25 5 15-10M805 370l-8-30 5-15M830 400l40 5-12 20M715 440l30 20-20 20M960 540l10 20-5 40M985 555l-12 30 10 20M1030 550l20 10-6 8M1050 610l20-12 5-22M1000 690l20 8M1080 630l15-8M975 640l10 18M870 590h30v18M880 600l8 18M932 640l30 14-14 20M725 540l20 20 10 30M760 570l20-5M700 540l-16 30 20 20M630 530l30 20M640 580l25-20M740 650l35 30 15 25M800 670l-15 30M510 530l-12 40M1000 690l-15-30M1070 580l-15 30M1020 620l20 0M490 560l-6-20M545 400l15 40-30 30M535 440l20 20M520 450l30 22M600 480l-20 5M600 495h20M640 520l12-10 15 8" />
    </g>
    <g fill="none" strokeLinejoin="round">
      {yellowRoads.map((d) => <path key={d} d={d} stroke="#e3d777" strokeWidth="4" />)}
      {yellowRoads.map((d) => <path key={d} d={d} stroke="#fff37d" strokeWidth="3" />)}
      {orangeRoads.map((d) => <path key={d} d={d} stroke="#e39c30" strokeWidth="6" />)}
      {orangeRoads.map((d) => <path key={d} d={d} stroke="#fdb63c" strokeWidth="4.500" />)}
      <path d="M482 385L490 373L520 372L549 383L592 415L610 433L617 453L622 487L623 518L647 537L720 577L747 610L748 630L755 647Q765 667 783 668Q795 666 800 655L843 611" stroke="#0aa04f" strokeWidth="2" />
      <path d="M843 611Q865 592 889 588L927 572Q943 570 951 581L970 603Q978 622 960 650L939 664M905 582Q922 565 917 533L900 520L875 493M755 647L738 635M687 658L633 687M610 703L590 707L570 706Q560 690 539 691" stroke="#946bb0" strokeWidth="1.500" />
      <path d="M482 704L539 691L577 693Q590 705 595 716" stroke="#1272b8" strokeWidth="2" />
    </g>
    {stations.map(([x, y]) => (
      <g key={x}>
        <ellipse cx={x} cy={y} rx="5" ry="4" fill="#b8205a" />
        <path d={`M${x - 2} ${y - 2}l4 4m0-4l-4 4`} stroke="#fff" strokeWidth="1.300" />
      </g>
    ))}
    {roadNames.map((n) => (
      <text key={n.text + n.x} transform={`rotate(${n.r} ${n.x} ${n.y})`} x={n.x} y={n.y + 4} textAnchor="middle" fontSize="10" fill="#4a3a10" stroke={n.orange ? "#fdb63c" : "#fff37d"} strokeWidth="3" paintOrder="stroke">{n.text}</text>
    ))}
    {labels.map((l) => (
      <g key={l.x + "-" + l.y} textAnchor="middle" fill={l.sea ? "#5b7ba6" : "#444"} stroke={l.sea ? "#a5bfdd" : "#f4f3f0"} strokeWidth="2" paintOrder="stroke">
        {l.zh && <text x={l.x} y={l.y} fontSize="11">{l.zh}</text>}
        {l.en?.map((line, i) => <text key={line} x={l.x} y={l.y + 12 + i * 11} fontSize="10">{line}</text>)}
      </g>
    ))}
    {busStops.map(([n, x, y], i) => (
      <g key={i}>
        <ellipse cx={x - 1} cy={y + 1} rx="14" ry="11" fill="#6a0870" />
        <ellipse cx={x} cy={y} rx="13.500" ry="10" fill="url(#pin)" />
        <text x={x} y={y + 4} textAnchor="middle" fontSize="11" fontWeight="700" fill="#000">{n}</text>
      </g>
    ))}
    <path d="M929 497h29q3 0 3 3v29q0 3-3 3h-10l-5 17-5-17h-9q-3 0-3-3v-29q0-3 3-3z" fill="url(#stop1)" />
    <path d="M935 503h17v24h-3v3h-4v-3h-4v3h-4v-3h-2z" fill="#fff" />
    <path d="M937 505h13v4h-13zM937 511h13v9h-13zM937 523h3M947 523h3" fill="#ff5a05" stroke="#ff5a05" />
    <text x="943" y="522" textAnchor="middle" fontSize="12" fontWeight="700">1</text>
    <text x="485" y="689" fontSize="7" fill="#444">POWERED BY</text>
    <text x="484" y="708" fontFamily="Liberation Serif" fontSize="22" stroke="#fff" strokeWidth="2" paintOrder="stroke">
      <tspan fill="#1a58d8">G</tspan><tspan fill="#d8281c">o</tspan><tspan fill="#f0b400">o</tspan><tspan fill="#1a58d8">g</tspan><tspan fill="#1c9a38">l</tspan><tspan fill="#d8281c">e</tspan>
    </text>
  </svg>
);

const MapControls = () => (
  <svg viewBox="0 0 54 190" className="absolute left-[10px] top-[7px] h-[190px] w-[54px]" fill="none">
    <circle cx="28" cy="30" r="25" fill="#8a8a8a" opacity=".7" />
    <circle cx="26" cy="28" r="25" fill="#fff" stroke="#ccc" />
    <path d="M21 14l5-5 5 5M21 42l5 5 5-5M12 23l-5 5 5 5M40 23l5 5-5 5" stroke="#5b86cf" strokeWidth="3" />
    <path d="M22 33c-2-2-3-4-2-5l2 1v-5h2v-2h2v1h2v1h2v6c0 2-1 4-2 5h-5z" stroke="#5b86cf" />
    <path d="M24 28v-4M26 27v-4M28 28v-4" stroke="#5b86cf" />
    <rect x="24" y="86" width="5" height="82" fill="#fff" stroke="#888" />
    <path d="M26.500 90v74" stroke="#777" strokeDasharray="1 5" />
    <path d="M18 86V73q0-8 8-8t8 8v13z" fill="#fff" stroke="#999" />
    <path d="M22 76h8M26 72v8" stroke="#5b86cf" strokeWidth="2" />
    <path d="M18 168h16v13q0 7-8 7t-8-7z" fill="#fff" stroke="#999" />
    <path d="M22 178h8" stroke="#5b86cf" strokeWidth="2" />
    <rect x="19" y="135" width="14" height="8" rx="3" fill="#fff" stroke="#777" />
    <path d="M22 139h8" stroke="#5b86cf" strokeWidth="2" />
  </svg>
);

const MapPanel = () => (
  <div className="relative h-[395px] flex-1 overflow-hidden">
    <MapDrawing />
    <MapControls />
    <svg viewBox="0 0 8 32" className="absolute left-0 top-[168px] h-8 w-2"><rect width="8" height="32" fill="#f7f7f7" /><path d="M5 13l-3 3 3 3" stroke="#999" fill="none" /></svg>
    <div className="absolute right-[7px] top-[7px] flex gap-[2px] text-[13px] font-bold">
      <button className="h-[25px] w-[84px] border-2 border-black bg-white font-bold text-[#555]">巴士站顯示</button>
      <div className="relative">
        <select aria-label="地圖" className="h-[25px] w-[63px] appearance-none border border-b-2 border-r-2 border-black bg-white pl-[6px] font-bold text-black">
          <option>地圖</option>
        </select>
        <svg viewBox="0 0 12 6" className="pointer-events-none absolute right-2 top-1 h-[6px] w-3"><path d="M0 0h12L6 6z" /></svg>
      </div>
    </div>
    <div className="absolute bottom-1 right-[124px] whitespace-nowrap text-[11px] leading-4 text-black [font-family:'Liberation_Sans','Noto_Sans_CJK_TC',sans-serif]">
      地圖資料 ©2012 Google, MapKing, Mapabc - <a href="#terms" className="text-[#7777cc]">使用條款</a>
    </div>
  </div>
);

/* ---------- site footer ---------- */

const SiteFooter = () => (
  <footer className="flex justify-between pl-[9px] pr-[6px] pt-[29px] text-xs text-[#888]">
    <div className="flex gap-[18px]">
      <svg viewBox="0 0 56 32" className="h-8 w-14">
        <path d="M1 24C2 8 14 3 28 3c-8 1-12 4-15 7C7 11 3 16 1 24z" fill="#444" /><path d="M6 10C12 3 20 3 28 3c-6 1-10 3-14 5z" fill="#f58220" /><path d="M9 18C12 9 19 6 28 4c-6 3-9 9-13 13z" fill="#e2001a" />
        <text x="18" y="25" fontSize="9" fontWeight="700" fill="#888" fontFamily="Noto Sans CJK TC">載通國際</text>
        <text x="18" y="30" fontSize="4" fill="#888" fontFamily="Liberation Sans">Transport International</text>
      </svg>
      <svg viewBox="0 0 50 32" className="h-8 w-[50px]">
        <path d="M3 5l5-2-5 18M12 18c-4-4 2-18 6-14s-2 16-6 14z" fill="none" stroke="#f5b700" strokeWidth="2" />
        <path d="M20 12q12-2 22-1" stroke="#f5b700" fill="none" /><rect x="20" y="14" width="27" height="6" fill="#d8102a" />
        <text x="21" y="19" fontSize="5" fill="#fff" fontFamily="Noto Sans CJK TC">商界展關懷</text>
        <text x="5" y="25" fontSize="6" fill="#222" fontFamily="Liberation Sans">caring<tspan fontWeight="700">company</tspan></text>
        <text x="8" y="30" fontSize="4" fill="#777" fontFamily="Liberation Sans">Awarded by HKCSS</text>
      </svg>
      <svg viewBox="0 0 40 32" className="h-8 w-10">
        <path d="M19 3l12 21H7z" fill="#f3c79a" stroke="#2478e0" strokeWidth="2" /><circle cx="19" cy="11" r="2" fill="#333" /><path d="M14 16h10M12 20h14" stroke="#555" strokeWidth="2" strokeDasharray="2 1" />
        <text x="2" y="30" fontSize="4" fill="#222" fontFamily="Liberation Sans">Certificate No. 0488</text>
      </svg>
    </div>
    <div className="pt-[3px] text-right leading-5">
      <div className="flex">
        {["招聘人才", "聯絡我們", "網頁指南", "私隱政策", "免責條款"].map((text, i) => (
          <span key={text} className="flex">
            {i > 0 && <span className="w-[17px] text-center text-[#a08090]">|</span>}
            <a href={"#foot" + i}>{text}</a>
          </span>
        ))}
      </div>
      <p className="pr-[6px]">© 2011九龍巴士(一九三三)有限公司 版權所有</p>
    </div>
  </footer>
);

/* ---------- taskbar ---------- */

const apps: { name: string; active?: string; icon: ReactNode }[] = [
  {
    name: "explorer",
    icon: <svg viewBox="0 0 40 40" className="h-10 w-10"><path d="M2 7l2-5h12l2 3h14l4 4 2 24-3 4H2z" fill="#f4e19a" stroke="#c9a94e" /><path d="M5 3h7v3H5zM14 6h8v3h-8zM24 9h10v3H24z" fill="#fff" /><path d="M7 3h3v3H7z" fill="#2f9a4c" /><path d="M15 6h3v3h-3z" fill="#c8311f" /><path d="M25 9h3v3h-3z" fill="#2876c8" /><path d="M6 38V28q0-4 4-4h20q4 0 4 4v10h-6v-8H12v8z" fill="#8ccbe8" stroke="#5aa3c6" /></svg>,
  },
  {
    name: "internet explorer",
    icon: <svg viewBox="0 0 40 40" className="h-10 w-10" fill="none"><path d="M35 24H14c1 7 9 8 12 3h8C30 40 5 39 6 22 7 5 36 4 35 24zM14 18h13c-1-7-12-7-13 0z" fill="#2b9be8" fillRule="evenodd" /><path d="M5 37C-3 34 12 6 37 3c4 0 1 8-1 10 2-5 2-7-1-7C18 8 3 30 5 37z" fill="#f2bf3a" /></svg>,
  },
  { name: "firefox", active: "bg-gradient-to-b from-[#bdbdbd] to-[#7c7c7c] border-white", icon: <FirefoxBall className="h-10 w-10" /> },
  {
    name: "chrome",
    icon: <svg viewBox="0 0 40 40" className="h-10 w-10"><circle cx="20" cy="20" r="17" fill="#f7cf2e" /><path d="M20 20L5 12A17 17 0 0135 12z" fill="#dd3a2c" /><path d="M20 20L5 12a17 17 0 0014 25l7-13z" fill="#3fa648" /><circle cx="20" cy="20" r="8" fill="#fff" /><circle cx="20" cy="20" r="6.500" fill="#3b82d4" /></svg>,
  },
  {
    name: "media player",
    icon: <svg viewBox="0 0 40 40" className="h-10 w-10"><path d="M12 5h22v29l-4 3H12z" fill="#4f9ac4" stroke="#9fd2ec" /><path d="M4 7h25v28H4z" fill="#8cc6e6" stroke="#c5e6f5" /><circle cx="16" cy="21" r="11" fill="#f47b20" stroke="#fff" /><path d="M12 14l10 7-10 7z" fill="#fff" /></svg>,
  },
  {
    name: "zynga",
    icon: <svg viewBox="0 0 40 40" className="h-10 w-10"><rect width="40" height="40" rx="3" fill="#a50d14" /><path d="M19 3l4-1 3 2 4 1v2l-5 2 1 6-1 4 1 4-1 3h-2v-5l-3-5-5 0-3 4 0 6h-2l-1-7 1-5-3-6 3 4 4-1 5-2z" fill="#fff" /><text x="20" y="36" textAnchor="middle" fontSize="12" fontWeight="700" fill="#fff" fontFamily="Open Sans">zynga</text></svg>,
  },
  {
    name: "messenger",
    active: "bg-gradient-to-b from-[#666] to-[#282828] border-[#999]",
    icon: <svg viewBox="0 0 40 40" className="h-10 w-10"><circle cx="25" cy="9" r="5" fill="#68aee0" /><path d="M17 34V20q0-6 8-6t9 7v13z" fill="#4b91cc" /><circle cx="13" cy="11" r="4.500" fill="#79c273" /><path d="M5 34V21q1-5 8-5t8 6v12z" fill="#5aa862" /><path d="M2 20c4-5 8 8 18 6 8-2 12-6 16-10-1 8-9 15-18 14C10 30 2 25 2 20z" fill="#e9c66a" /><rect x="23" y="23" width="12" height="12" fill="#50e000" stroke="#196a00" /></svg>,
  },
];

const Taskbar = () => (
  <div className="flex h-12 items-center border-t border-[#777] bg-gradient-to-b from-[#2a2a2a] via-[#0b0b0b] via-15% to-[#111] text-white">
    <button aria-label="start" className="mr-1 flex w-[68px] justify-center">
      <svg viewBox="0 0 44 44" className="h-11 w-11">
        <defs><radialGradient id="orb" cx=".5" cy=".9"><stop offset="0" stopColor="#2fd0f5" /><stop offset=".6" stopColor="#1b5f94" /><stop offset="1" stopColor="#5a7d99" /></radialGradient></defs>
        <circle cx="22" cy="22" r="21" fill="url(#orb)" stroke="#9ab" />
        <path d="M13 12q4-3 9-1l-2 9q-5-2-10 0z" fill="#e9602c" /><path d="M24 12q5 2 10 0l-3 9q-5 2-9 0z" fill="#8cc63f" /><path d="M9 22q5-2 10 0l-2 9q-5-2-10 0z" fill="#3b9be0" /><path d="M21 23q5 2 9 0l-2 9q-5 2-10 0z" fill="#fbc52d" />
      </svg>
    </button>
    <div className="flex gap-1">
      {apps.map((app) => (
        <button key={app.name} aria-label={app.name} className={"flex h-[46px] w-[66px] items-center justify-center rounded-sm border " + (app.active ?? "border-transparent")}>{app.icon}</button>
      ))}
    </div>
    <div className="ml-auto flex items-center">
      <svg viewBox="0 0 20 18" className="mr-2 h-[18px] w-5" fill="none" stroke="#ddd"><path d="M2 5q4-4 8-1t8-3" /><rect x=".5" y="7.500" width="19" height="9" fill="#aaa" /><path d="M2 10h16M2 12.500h16M5 15h10" stroke="#333" strokeDasharray="2 1" /></svg>
      <svg viewBox="0 0 18 18" className="mb-1 mr-[10px] h-[18px] w-[18px]"><circle cx="9" cy="9" r="8.500" fill="#1428c8" stroke="#ccd" /><path d="M6 7q0-3 3-3t3 2.500Q12 8 9 10v1.500M9 13v2" stroke="#fff" strokeWidth="2" fill="none" /></svg>
      <svg viewBox="0 0 10 20" className="mb-2 mr-[14px] h-5 w-[10px]" fill="none" stroke="#fff"><path d="M3 2h6v4H6M1 4h5v4H1z" /><path d="M2 16h5l-2.500 3z" fill="#fff" stroke="none" /></svg>
      <svg viewBox="0 0 9 5" className="mr-[17px] h-[5px] w-[9px]" fill="#ddd"><path d="M0 5h9L4.500 0z" /></svg>
      <svg viewBox="0 0 20 20" className="mr-3 h-5 w-5" fill="none" stroke="#fff"><path d="M5 5h13v9H6M8 17.500h8M12 14v3" strokeWidth="1.500" /><path d="M1 2h5v5H1zM3.500 7v11M2 18h3" /></svg>
      <svg viewBox="0 0 20 20" className="mr-2 h-5 w-5" fill="none" stroke="#ddd"><path d="M1 7h3l5-5v16l-5-5H1z" fill="#fff" /><path d="M12 7q2 3 0 6M15 5q3 5 0 10" /></svg>
      <svg viewBox="0 0 20 20" className="h-5 w-5"><path d="M2 1v18M3 2q5 2 8 0 4 4 6 2v9q-4 1-7-1-4 2-7 0z" fill="#fff" stroke="#fff" /><circle cx="14" cy="14" r="5.500" fill="#d8281c" /><path d="M11.500 11.500l5 5m0-5l-5 5" stroke="#fff" strokeWidth="1.800" /></svg>
      <div className="w-[104px] whitespace-nowrap pl-2 text-center text-[15px] leading-[21px]">4:36<br />9/5/2012</div>
      <button aria-label="desktop" className="h-[46px] w-[14px] border border-[#666] bg-gradient-to-b from-[#555] to-[#111] to-40%" />
    </div>
  </div>
);

export default function App() {
  return (
    <div className="flex min-h-screen flex-col bg-white">
      <header className={uiFont}>
        <TitleBar />
        <Bookmarks />
        <TabStrip />
      </header>
      <main className={"mx-auto w-full max-w-[956px] flex-1 " + pageFont}>
        <SiteHeader />
        <NavBar />
        <SubHeader />
        <SearchBar />
        <div className="flex">
          <RoutePanel />
          <MapPanel />
        </div>
        <SiteFooter />
      </main>
      <div className={uiFont}>
        <Taskbar />
      </div>
    </div>
  );
}
